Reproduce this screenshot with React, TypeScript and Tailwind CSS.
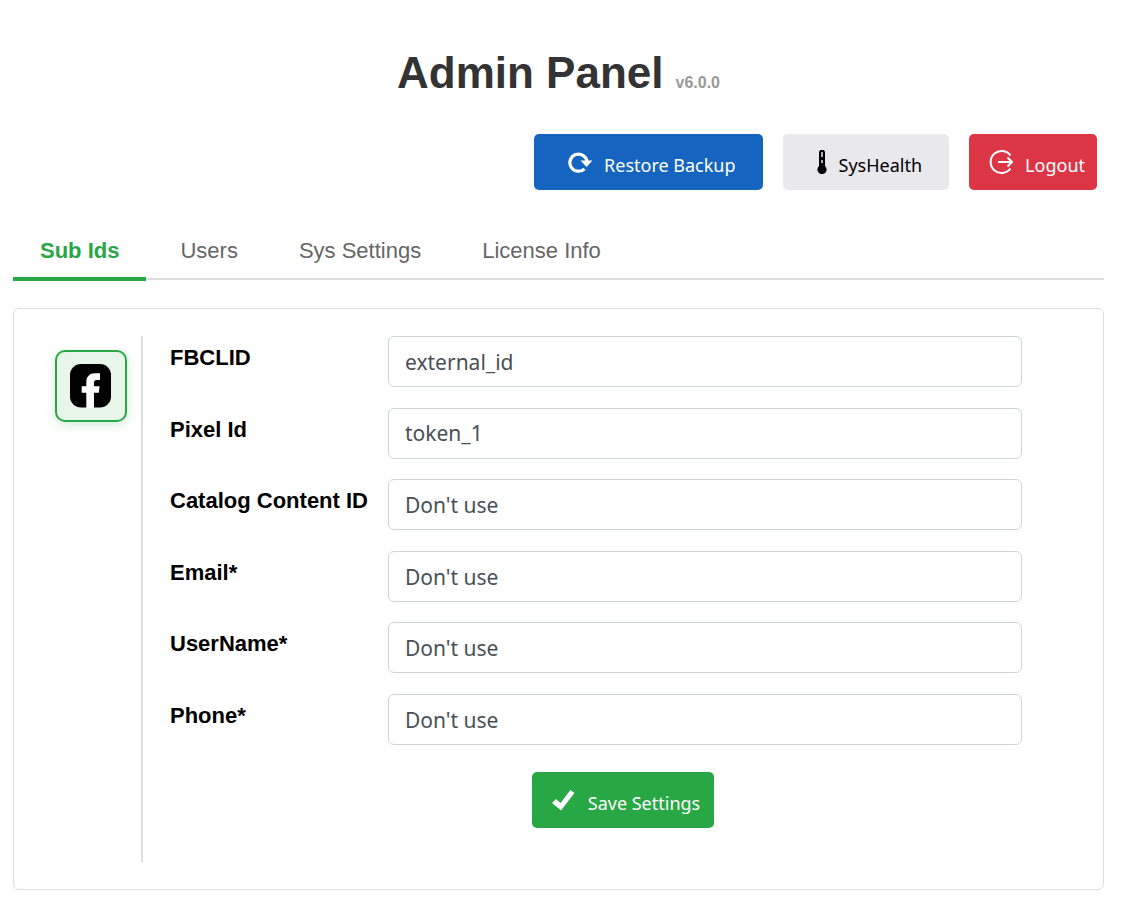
import React, { useState } from "react";

const tabs = ["Sub Ids", "Users", "Sys Settings", "License Info"];

const fields = [
    { id: "fbclid", label: "FBCLID", value: "external_id" },
    { id: "pixel", label: "Pixel Id", value: "token_1" },
    { id: "catalog", label: "Catalog Content ID", value: "Don't use" },
    { id: "email", label: "Email*", value: "Don't use" },
    { id: "username", label: "UserName*", value: "Don't use" },
    { id: "phone", label: "Phone*", value: "Don't use" },
];

const options = ["Don't use", "external_id", "token_1"];

function RestoreIcon() {
    return (
        <svg width="24" height="24" viewBox="0 0 24 24" fill="none" aria-hidden="true">
            <path d="M16.5 18.8A8.6 8.6 0 1 1 19 11.5" stroke="currentColor" strokeWidth="3.2" />
            <path d="M12.5 10.5H24.5L18.5 17Z" fill="currentColor" />
        </svg>
    );
}

function ThermometerIcon() {
    return (
        <svg width="10" height="26" viewBox="0 0 10 26" aria-hidden="true">
            <path d="M2 3.5A2.5 2.5 0 0 1 3.5 1H6.5A2.5 2.5 0 0 1 8 3.5V17A4.6 4.6 0 1 1 2 17Z" fill="currentColor" />
            <path d="M5 3V14" stroke="#e9e8ed" strokeWidth="1.5" strokeDasharray="5 3 3 3" />
        </svg>
    );
}

function LogoutIcon() {
    return (
        <svg width="24" height="26" viewBox="0 0 24 26" fill="none" stroke="currentColor" strokeWidth="2" aria-hidden="true">
            <path d="M21.5 6.5A11 11 0 1 0 21.5 19.5" />
            <path d="M9 13H23M18.5 8.5L23 13L18.5 17.5" />
        </svg>
    );
}

function CheckIcon() {
    return (
        <svg width="24" height="24" viewBox="0 0 24 24" aria-hidden="true">
            <path d="M0 15L4 11L8.5 15L18.5 2L22.5 5L9 22.5Z" fill="currentColor" />
        </svg>
    );
}

function FacebookIcon() {
    return (
        <svg width="42" height="44" viewBox="0 0 42 44" aria-hidden="true">
            <rect width="41" height="43.5" rx="11" fill="#000" />
            <path d="M16.3 44V28.7H11.7V22.3H16.3V18.5C16.3 12.6 19.5 9.3 25 9.3H30V16H27C24.6 16 24 17 24 19V22.3H29.6L28.8 28.7H24V44Z" fill="#fff" />
        </svg>
    );
}

export default function App() {
    const [activeTab, setActiveTab] = useState("Sub Ids");

    return (
        <div className="min-h-screen bg-white pl-[13px] pr-5 pt-10 pb-4 font-['Liberation_Sans',Arial,sans-serif] text-[22px] text-black">
            <header className="flex items-baseline justify-center gap-3 font-bold">
                <h1 className="text-[44px] leading-[66px] text-[#333]">Admin Panel</h1>
                <span className="text-base text-[#999]">v6.0.0</span>
            </header>

            <div className="mt-7 flex justify-end gap-5 pr-[7px] font-['Noto_Sans',Tahoma,sans-serif] text-lg">
                <button type="button" className="flex h-14 items-center gap-3 rounded-[5px] bg-[#1565c0] pl-[34px] pr-[27px] text-white">
                    <RestoreIcon />
                    <span className="pt-1.5">Restore Backup</span>
                </button>
                <button type="button" className="flex h-14 items-center gap-3 rounded-[5px] bg-[#e9e8ed] pl-[34px] pr-[27px]">
                    <ThermometerIcon />
                    <span className="pt-1.5">SysHealth</span>
                </button>
                <button type="button" className="flex h-14 items-center gap-3 rounded-[5px] bg-[#dc3545] pl-5 pr-3 text-white">
                    <LogoutIcon />
                    <span className="pt-1.5">Logout</span>
                </button>
            </div>

            <nav className="mt-8 flex gap-[7px] border-b-2 border-[#ddd]">
                {tabs.map((tab) => (
                    <button
                        key={tab}
                        type="button"
                        onClick={() => setActiveTab(tab)}
                        className={`-mb-[3px] border-b-4 px-[27px] pt-[13px] pb-2.5 leading-8 ${activeTab === tab
                            ? "border-[#28a745] font-bold text-[#28a745]"
                            : "border-transparent text-[#666]"
                            }`}
                    >
                        {tab}
                    </button>
                ))}
            </nav>

            <main className="mt-7 flex rounded-md border border-[#ddd] p-[27px]">
                <aside className="border-r-2 border-[#ddd] p-3.5">
                    <button
                        type="button"
                        aria-label="Facebook"
                        className="flex size-[72px] items-center justify-center rounded-[10px] border-2 border-[#28a745] bg-[#e8f5e9] shadow-[0_3px_11px_rgba(40,167,69,0.2)]"
                    >
                        <FacebookIcon />
                    </button>
                </aside>

                <form className="flex-1 pb-[34px] pl-[27px]" onSubmit={(e) => e.preventDefault()}>
                    <div className="flex min-h-[409px] flex-col justify-between pr-[54px]">
                        {fields.map((field) => (
                            <div key={field.id} className="flex">
                                <label htmlFor={field.id} className="w-[218px] shrink-0 pt-1.5 leading-8 font-bold">
                                    {field.label}
                                </label>
                                <select
                                    id={field.id}
                                    defaultValue={field.value}
                                    className="h-[51px] min-w-0 flex-1 appearance-none rounded-md border border-[#ced4da] bg-white px-4 pt-0.5 font-['Noto_Sans',Tahoma,sans-serif] text-[21px] text-[#495057]"
                                >
                                    {options.map((option) => (
                                        <option key={option}>{option}</option>
                                    ))}
                                </select>
                            </div>
                        ))}
                    </div>
                    <div className="mt-[27px] flex justify-center font-['Noto_Sans',Tahoma,sans-serif] text-lg">
                        <button type="submit" className="flex h-14 items-center gap-3 rounded-[5px] bg-[#28a745] pl-5 pr-3.5 text-white">
                            <CheckIcon />
                            <span className="pt-1.5">Save Settings</span>
                        </button>
                    </div>
                </form>
            </main>
        </div>
    );
}
